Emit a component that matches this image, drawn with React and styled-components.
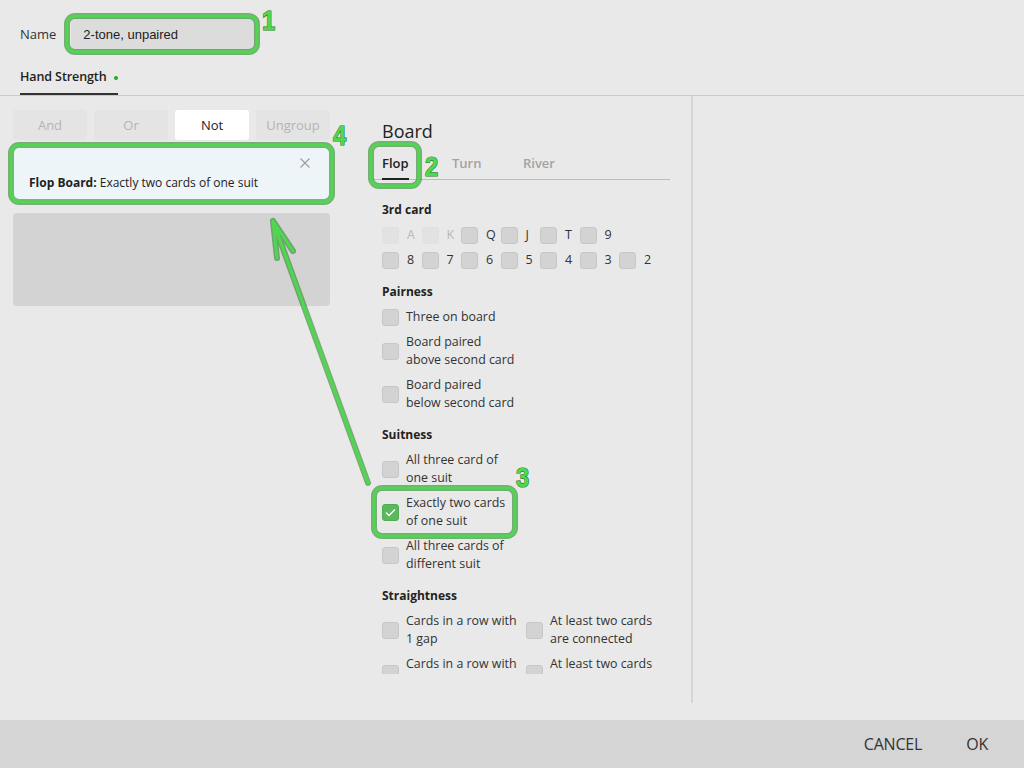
import React from "react";
import styled, { createGlobalStyle } from "styled-components";

const GlobalStyle = createGlobalStyle`
  html, body { margin: 0; padding: 0; }
  body {
    background: #e9e9e9;
    font-family: "Open Sans", "Noto Sans", sans-serif;
    color: #222;
  }
  * { box-sizing: border-box; }
`;

const Page = styled.div`
  position: relative;
  width: 1024px;
  height: 768px;
  display: flex;
  flex-direction: column;
  background: #e9e9e9;
  overflow: hidden;
`;

const Header = styled.div`
  display: flex;
  flex-direction: column;
  border-bottom: 1px solid #c9c9c9;
`;

const NameRow = styled.div`
  height: 68px;
  display: flex;
  align-items: center;
  padding: 0 0 0 20px;
  gap: 15px;
`;

const Label = styled.span`
  font-size: 13px;
  color: #333;
`;

const NameInput = styled.div`
  width: 184px;
  height: 32px;
  border-radius: 5px;
  background: #dcdcdc;
  display: flex;
  align-items: center;
  padding-left: 12px;
  font-family: "Liberation Sans", Arial, sans-serif;
  font-size: 13px;
  color: #222;
`;

const TabBar = styled.div`
  display: flex;
  padding-left: 20px;
  height: 27px;
`;

const MainTab = styled.div`
  display: flex;
  align-items: flex-start;
  gap: 8px;
  font-size: 12.5px;
  font-weight: 600;
  color: #222;
  border-bottom: 2px solid #333;
  white-space: nowrap;
  line-height: 17px;
  letter-spacing: -0.1px;
`;

const Dot = styled.span`
  width: 4px;
  height: 4px;
  border-radius: 50%;
  background: #27a827;
  margin-top: 8px;
`;

const Main = styled.div`
  flex: 1;
  display: flex;
  min-height: 0;
`;

const LeftCol = styled.div`
  width: 370px;
  padding: 14px 0 0 13px;
  display: flex;
  flex-direction: column;
`;

const ButtonRow = styled.div`
  display: flex;
  gap: 7px;
`;

const OpButton = styled.div`
  width: 74px;
  height: 30px;
  border-radius: 3px;
  background: ${(p) => (p.$active ? "#ffffff" : "#e4e4e4")};
  color: ${(p) => (p.$active ? "#222" : "#b4b4b4")};
  font-size: 13px;
  display: flex;
  align-items: center;
  justify-content: center;
`;

const RuleCard = styled.div`
  position: relative;
  margin-top: 7px;
  width: 317px;
  height: 53px;
  background: #eef5f9;
  border-radius: 4px;
  padding: 27px 0 0 16px;
  font-size: 12px;
  line-height: 18px;
  color: #222;
`;

const Close = styled.span`
  position: absolute;
  right: 19px;
  top: 10px;
  width: 12px;
  height: 12px;
  display: flex;
`;

const GreyBox = styled.div`
  margin-top: 13px;
  width: 317px;
  height: 93px;
  background: #d3d3d3;
  border-radius: 4px;
`;

const MidCol = styled.div`
  width: 300px;
  display: flex;
  flex-direction: column;
  padding-top: 23px;
  height: 580px;
`;

const BoardTitle = styled.div`
  font-size: 18px;
  line-height: 24px;
  padding-left: 12px;
  color: #222;
`;

const SubTabs = styled.div`
  display: flex;
  border-bottom: 1px solid #bcbcbc;
  padding-left: 12px;
  height: 37px;
  align-items: flex-end;
`;

const SubTab = styled.div`
  font-size: 13px;
  font-weight: 600;
  color: ${(p) => (p.$active ? "#222" : "#a3a3a3")};
  width: ${(p) => p.$w}px;
  line-height: 18px;
  padding-bottom: 7px;
  position: relative;
  &::after {
    content: "";
    display: ${(p) => (p.$active ? "block" : "none")};
    position: absolute;
    left: 0;
    bottom: -1px;
    width: 27px;
    height: 2px;
    background: #222;
  }
`;

const ScrollArea = styled.div`
  position: relative;
  margin-top: 4px;
  height: 490px;
  overflow: hidden;
  display: flex;
`;

const ScrollContent = styled.div`
  flex: 1;
  padding: 17px 0 0 12px;
`;

const Track = styled.div`
  width: 13px;
  background: #ebebeb;
  position: relative;
`;

const Thumb = styled.div`
  position: absolute;
  left: 5px;
  top: 125px;
  width: 6px;
  height: 320px;
  background: #bdbdbd;
`;

const Section = styled.div`
  display: flex;
  flex-direction: column;
  gap: 7px;
  & + & {
    margin-top: 14px;
  }
`;

const Heading = styled.div`
  font-size: 12px;
  font-weight: 700;
  line-height: 18px;
  color: #222;
`;

const CardRow = styled.div`
  display: flex;
`;

const CardItem = styled.div`
  width: 39.5px;
  display: flex;
  align-items: center;
  gap: 8px;
  font-size: 12.5px;
  line-height: 18px;
  color: ${(p) => (p.$disabled ? "#b8b8b8" : "#333")};
`;

const Box = styled.span`
  flex: none;
  width: 17px;
  height: 17px;
  border-radius: 3px;
  background: ${(p) => (p.$checked ? "#5cb85c" : p.$disabled ? "#e2e2e2" : "#d3d3d3")};
  border: 1px solid ${(p) => (p.$checked ? "#52ad52" : p.$disabled ? "#e0e0e0" : "#c7c7c7")};
  display: flex;
  align-items: center;
  justify-content: center;
`;

const Option = styled.div`
  display: flex;
  align-items: center;
  gap: 7px;
  font-size: 12.4px;
  line-height: 18px;
  color: #333;
  width: ${(p) => p.$w || 144}px;
  white-space: nowrap;
`;

const TwoCol = styled.div`
  display: flex;
`;

const Divider = styled.div`
  width: 2px;
  margin-left: 21px;
  height: 607px;
  background: #d6d6d6;
`;

const Footer = styled.div`
  height: 48px;
  background: #d5d5d5;
  display: flex;
  justify-content: flex-end;
  align-items: center;
  padding-right: 36px;
  gap: 44px;
`;

const FooterButton = styled.span`
  font-size: 16px;
  color: #333;
  letter-spacing: -0.2px;
`;

const Overlay = styled.svg`
  position: absolute;
  left: 0;
  top: 0;
  pointer-events: none;
`;

const Check = () => (
  <svg width="11" height="9" viewBox="0 0 11 9">
    <path d="M1 4.5 L4 7.5 L10 1.5" fill="none" stroke="#fff" strokeWidth="1.4" />
  </svg>
);

const CardCheck = ({ label, disabled }) => (
  <CardItem $disabled={disabled}>
    <Box $disabled={disabled} />
    {label}
  </CardItem>
);

const Opt = ({ children, checked, w }) => (
  <Option $w={w}>
    <Box $checked={checked}>{checked && <Check />}</Box>
    <span>{children}</span>
  </Option>
);

const AnnoRect = ({ x, y, w, h }) => (
  <g>
    <rect x={x} y={y} width={w} height={h} rx="8" fill="none" stroke="#1f7a1f" strokeOpacity="0.55" strokeWidth="6" />
    <rect x={x} y={y} width={w} height={h} rx="8" fill="none" stroke="#4fd84f" strokeWidth="3" />
  </g>
);

const AnnoNum = ({ x, y, n }) => (
  <text
    x={x}
    y={y}
    fontFamily="Liberation Sans, Arial, sans-serif"
    fontWeight="700"
    fontSize="28"
    fill="#4fd84f"
    stroke="#1f7a1f"
    strokeWidth="1.2"
    paintOrder="stroke"
    transform={`translate(${x} ${y}) scale(0.85 1) translate(${-x} ${-y})`}
  >
    {n}
  </text>
);

export default function App() {
  return (
    <>
      <GlobalStyle />
      <Page>
        <Header>
          <NameRow>
            <Label>Name</Label>
            <NameInput>2-tone, unpaired</NameInput>
          </NameRow>
          <TabBar>
            <MainTab>
              Hand Strength <Dot />
            </MainTab>
          </TabBar>
        </Header>
        <Main>
          <LeftCol>
            <ButtonRow>
              <OpButton>And</OpButton>
              <OpButton>Or</OpButton>
              <OpButton $active>Not</OpButton>
              <OpButton>Ungroup</OpButton>
            </ButtonRow>
            <RuleCard>
              <Close>
                <svg width="12" height="12" viewBox="0 0 12 12">
                  <path d="M1.5 1.5 L10.5 10.5 M10.5 1.5 L1.5 10.5" stroke="#9a9a9a" strokeWidth="1.1" />
                </svg>
              </Close>
              <b>Flop Board:</b> Exactly two cards of one suit
            </RuleCard>
            <GreyBox />
          </LeftCol>
          <MidCol>
            <BoardTitle>Board</BoardTitle>
            <SubTabs>
              <SubTab $active $w={70}>Flop</SubTab>
              <SubTab $w={71}>Turn</SubTab>
              <SubTab $w={60}>River</SubTab>
            </SubTabs>
            <ScrollArea>
              <ScrollContent>
                <Section>
                  <Heading>3rd card</Heading>
                  <CardRow>
                    <CardCheck label="A" disabled />
                    <CardCheck label="K" disabled />
                    <CardCheck label="Q" />
                    <CardCheck label="J" />
                    <CardCheck label="T" />
                    <CardCheck label="9" />
                  </CardRow>
                  <CardRow>
                    <CardCheck label="8" />
                    <CardCheck label="7" />
                    <CardCheck label="6" />
                    <CardCheck label="5" />
                    <CardCheck label="4" />
                    <CardCheck label="3" />
                    <CardCheck label="2" />
                  </CardRow>
                </Section>
                <Section>
                  <Heading>Pairness</Heading>
                  <Opt>Three on board</Opt>
                  <Opt>
                    Board paired
                    <br />
                    above second card
                  </Opt>
                  <Opt>
                    Board paired
                    <br />
                    below second card
                  </Opt>
                </Section>
                <Section>
                  <Heading>Suitness</Heading>
                  <Opt>
                    All three card of
                    <br />
                    one suit
                  </Opt>
                  <Opt checked>
                    Exactly two cards
                    <br />
                    of one suit
                  </Opt>
                  <Opt>
                    All three cards of
                    <br />
                    different suit
                  </Opt>
                </Section>
                <Section>
                  <Heading>Straightness</Heading>
                  <TwoCol>
                    <Opt>
                      Cards in a row with
                      <br />1 gap
                    </Opt>
                    <Opt>
                      At least two cards
                      <br />
                      are connected
                    </Opt>
                  </TwoCol>
                  <TwoCol>
                    <Opt>
                      Cards in a row with
                      <br />2 gaps
                    </Opt>
                    <Opt>
                      At least two cards
                      <br />
                      are connected
                    </Opt>
                  </TwoCol>
                </Section>
              </ScrollContent>
              <Track>
                <Thumb />
              </Track>
            </ScrollArea>
          </MidCol>
          <Divider />
        </Main>
        <Footer>
          <FooterButton>CANCEL</FooterButton>
          <FooterButton>OK</FooterButton>
        </Footer>
        <Overlay width="1024" height="768" viewBox="0 0 1024 768">
          <AnnoRect x={67} y={16} w={190} h={36} />
          <AnnoRect x={371} y={144} w={48} h={42} />
          <AnnoRect x={374} y={488} w={141} h={48} />
          <AnnoRect x={11} y={145} w={321} h={57} />
          <g>
            <path d="M368 483 L273 221 M273 221 L277 258 M273 221 L293 251" fill="none" stroke="#1f7a1f" strokeOpacity="0.55" strokeWidth="6" strokeLinecap="round" />
            <path d="M368 483 L273 221 M273 221 L277 258 M273 221 L293 251" fill="none" stroke="#4fd84f" strokeWidth="3" strokeLinecap="round" />
          </g>
          <AnnoNum x={262} y={30} n="1" />
          <AnnoNum x={425} y={176} n="2" />
          <AnnoNum x={516} y={487} n="3" />
          <AnnoNum x={333} y={145} n="4" />
        </Overlay>
      </Page>
    </>
  );
}
